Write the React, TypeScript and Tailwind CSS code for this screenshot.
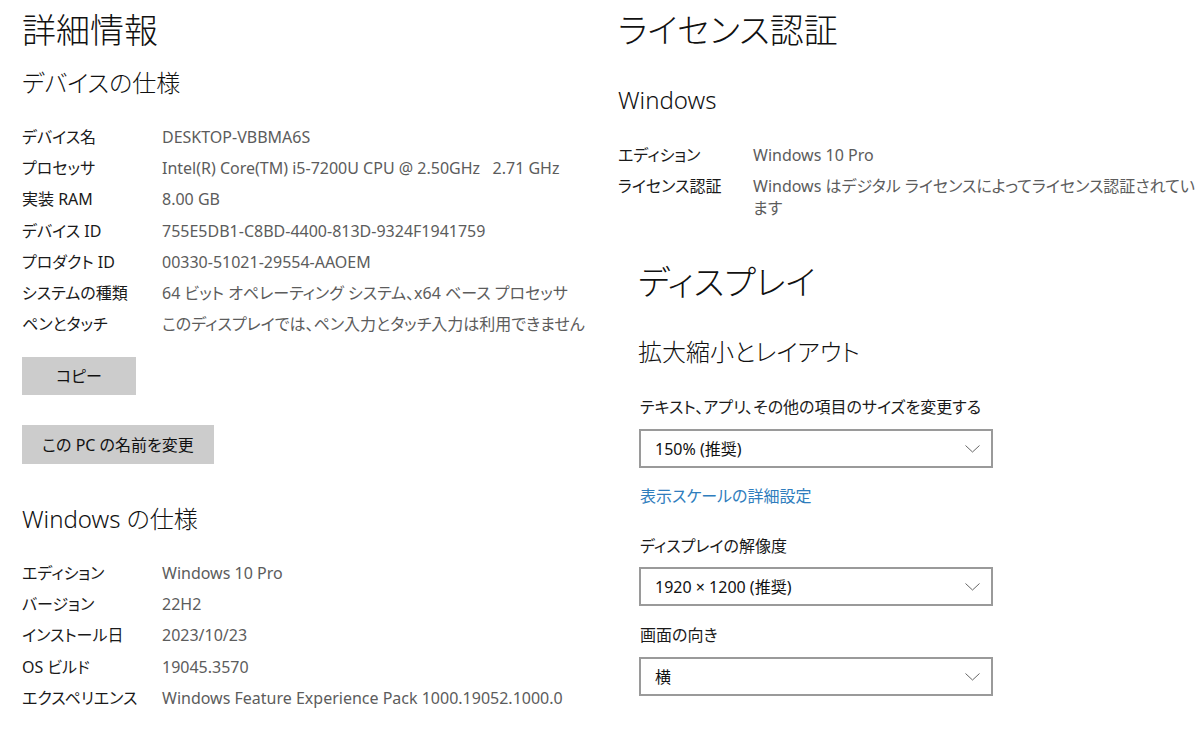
const font = "font-['Noto_Sans','Noto_Sans_CJK_JP',sans-serif] [font-feature-settings:'palt']";

const deviceSpecs: [string, string][] = [
  ['デバイス名', 'DESKTOP-VBBMA6S'],
  ['プロセッサ', 'Intel(R) Core(TM) i5-7200U CPU @ 2.50GHz   2.71 GHz'],
  ['実装 RAM', '8.00 GB'],
  ['デバイス ID', '755E5DB1-C8BD-4400-813D-9324F1941759'],
  ['プロダクト ID', '00330-51021-29554-AAOEM'],
  ['システムの種類', '64 ビット オペレーティング システム、x64 ベース プロセッサ'],
  ['ペンとタッチ', 'このディスプレイでは、ペン入力とタッチ入力は利用できません'],
];

const windowsSpecs: [string, string][] = [
  ['エディション', 'Windows 10 Pro'],
  ['バージョン', '22H2'],
  ['インストール日', '2023/10/23'],
  ['OS ビルド', '19045.3570'],
  ['エクスペリエンス', 'Windows Feature Experience Pack 1000.19052.1000.0'],
];

function SpecRow({ label, value }: { label: string; value: string }) {
  return (
    <div className="flex h-[31.3px] items-center text-[16px] leading-[22px]">
      <span className="w-[140px] shrink-0 text-[#1a1a1a]">{label}</span>
      <span className="whitespace-pre text-[#5c5c5c]">{value}</span>
    </div>
  );
}

function Chevron() {
  return (
    <svg width="15" height="8" viewBox="0 0 15 8" fill="none" className="shrink-0">
      <path d="M0.5 0.5 L7.5 7 L14.5 0.5" stroke="#666" strokeWidth="1" />
    </svg>
  );
}

function Dropdown({ value, className = '' }: { value: string; className?: string }) {
  return (
    <div
      className={`ml-[21px] flex h-[39px] w-[354px] items-center justify-between border-2 border-[#9a9a9a] bg-white pl-[14px] pr-[11px] text-[16px] text-[#111] ${className}`}
    >
      <span>{value}</span>
      <Chevron />
    </div>
  );
}

export default function App() {
  return (
    <div className={`flex h-[730px] w-[1200px] overflow-hidden bg-white text-black ${font}`}>
      {/* left: 詳細情報 */}
      <div className="flex w-[618px] shrink-0 flex-col pl-[22px]">
        <h1 className="mt-[10px] text-[34px] font-light leading-[40px] text-[#111]">詳細情報</h1>
        <h2 className="mt-[17px] text-[24px] font-light leading-[32px] text-[#111]">デバイスの仕様</h2>
        <div className="mt-[22px] flex flex-col">
          {deviceSpecs.map(([l, v]) => (
            <SpecRow key={l} label={l} value={v} />
          ))}
        </div>
        <button className="mt-[17px] flex h-[38px] w-[114px] items-center justify-center bg-[#cccccc] text-[16px] text-[#111]">
          コピー
        </button>
        <button className="mt-[30px] flex h-[39px] w-[192px] items-center justify-center bg-[#cccccc] text-[16px] text-[#111]">
          この PC の名前を変更
        </button>
        <h2 className="mt-[39px] text-[24px] font-light leading-[32px] text-[#111]">Windows の仕様</h2>
        <div className="mt-[22px] flex flex-col">
          {windowsSpecs.map(([l, v]) => (
            <SpecRow key={l} label={l} value={v} />
          ))}
        </div>
      </div>

      {/* right: ライセンス認証 + ディスプレイ */}
      <div className="flex flex-1 flex-col">
        <h1 className="mt-[10px] text-[34px] font-light leading-[40px] text-[#111]">ライセンス認証</h1>
        <h2 className="mt-[34px] text-[24px] font-light leading-[32px] text-[#111]">Windows</h2>
        <div className="mt-[23px] flex flex-col text-[16px] leading-[22px]">
          <div className="flex py-[4.5px]">
            <span className="w-[135px] shrink-0 text-[#1a1a1a]">エディション</span>
            <span className="text-[#5c5c5c]">Windows 10 Pro</span>
          </div>
          <div className="flex py-[4.5px]">
            <span className="w-[135px] shrink-0 text-[#1a1a1a]">ライセンス認証</span>
            <span className="text-[#5c5c5c]">
              Windows はデジタル ライセンスによってライセンス認証されてい
              <br />
              ます
            </span>
          </div>
        </div>

        <div className="flex flex-col">
          <h1 className="ml-[20px] mt-[39px] text-[34px] font-light leading-[40px] text-[#111]">ディスプレイ</h1>
          <h2 className="ml-[20px] mt-[34px] text-[24px] font-light leading-[32px] text-[#111]">拡大縮小とレイアウト</h2>
          <p className="ml-[22px] mt-[28px] text-[16px] leading-[22px] text-[#1a1a1a]">
            テキスト、アプリ、その他の項目のサイズを変更する
          </p>
          <Dropdown value="150% (推奨)" className="mt-[11px]" />
          <a className="ml-[22px] mt-[17px] w-fit text-[16px] leading-[22px] text-[#2f7dbd]">
            表示スケールの詳細設定
          </a>
          <p className="ml-[22px] mt-[28px] text-[16px] leading-[22px] text-[#1a1a1a]">ディスプレイの解像度</p>
          <Dropdown value="1920 × 1200 (推奨)" className="mt-[10px]" />
          <p className="ml-[22px] mt-[18px] text-[16px] leading-[22px] text-[#1a1a1a]">画面の向き</p>
          <Dropdown value="横" className="mt-[11px]" />
        </div>
      </div>
    </div>
  );
}
